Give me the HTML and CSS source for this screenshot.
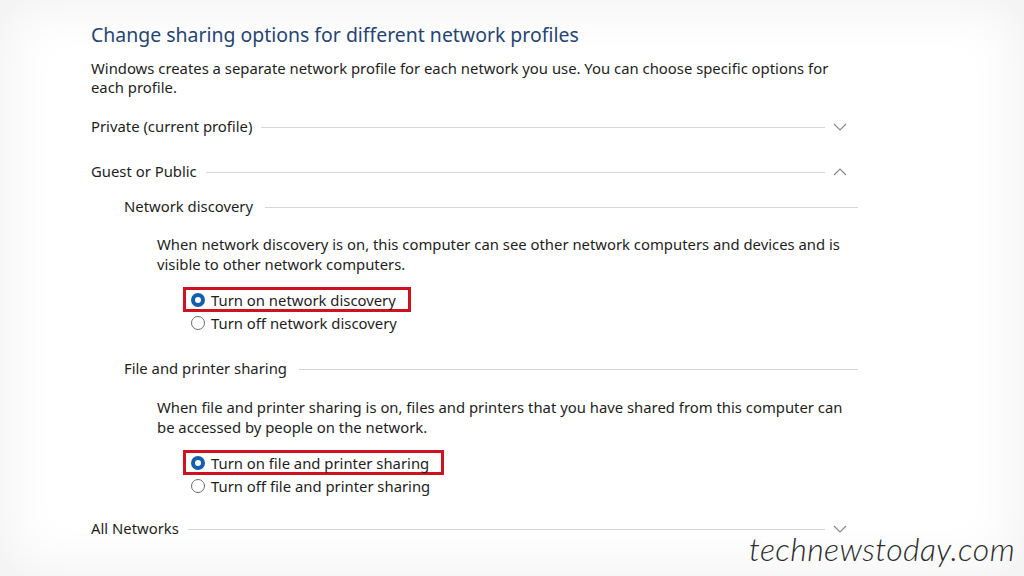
FILE: index.html
```html
<!DOCTYPE html>
<html lang="en">
<head>
  <meta charset="UTF-8" />
  <meta name="viewport" content="width=device-width, initial-scale=1" />
  <title>Advanced sharing settings</title>
  <link rel="stylesheet" href="styles.css">
</head>
<body>
  <div class="painel">
    <h1 class="titulo">Change sharing options for different network profiles</h1>
    <p class="intro">Windows creates a separate network profile for each network you use. You can choose specific options for each profile.</p>

    <div class="perfil perfil-private">
      <span class="perfil-nome">Private (current profile)</span>
      <span class="linha"></span>
      <svg class="seta" width="30" height="10" viewBox="0 0 30 10"><path d="M9 2 L15 8 L21 2" /></svg>
    </div>

    <div class="perfil perfil-guest">
      <span class="perfil-nome">Guest or Public</span>
      <span class="linha"></span>
      <svg class="seta" width="30" height="10" viewBox="0 0 30 10"><path d="M9 8 L15 2 L21 8" /></svg>
    </div>

    <div class="grupo">
      <div class="grupo-topo">
        <span class="grupo-nome">Network discovery</span>
        <span class="linha"></span>
      </div>
      <p class="texto">When network discovery is on, this computer can see other network computers and devices and is visible to other network computers.</p>
      <div class="opcoes">
        <label class="opcao marcada"><span class="radio on"></span>Turn on network discovery</label>
        <label class="opcao"><span class="radio"></span>Turn off network discovery</label>
      </div>
    </div>

    <div class="grupo grupo-arquivos">
      <div class="grupo-topo">
        <span class="grupo-nome">File and printer sharing</span>
        <span class="linha"></span>
      </div>
      <p class="texto">When file and printer sharing is on, files and printers that you have shared from this computer can be accessed by people on the network.</p>
      <div class="opcoes">
        <label class="opcao marcada"><span class="radio on"></span>Turn on file and printer sharing</label>
        <label class="opcao"><span class="radio"></span>Turn off file and printer sharing</label>
      </div>
    </div>

    <div class="perfil perfil-all">
      <span class="perfil-nome">All Networks</span>
      <span class="linha"></span>
      <svg class="seta" width="30" height="10" viewBox="0 0 30 10"><path d="M9 2 L15 8 L21 2" /></svg>
    </div>
  </div>

  <div class="marca">technewstoday.com</div>
</body>
</html>
```

FILE: styles.css
```css
* {
  margin: 0;
  padding: 0;
  box-sizing: border-box;
}
html, body {
  height: 100%;
  overflow: hidden;
}
body {
  background: #fff;
  font-family: "Noto Sans", "Open Sans", sans-serif;
  color: #1e1e1e;
  position: relative;
  box-shadow: inset 0 0 60px rgba(0, 0, 0, 0.07);
}
.painel {
  width: 767px;
  margin-left: 91px;
  padding-top: 21px;
}
.titulo {
  font-weight: 400;
  font-size: 19.45px;
  line-height: 28px;
  color: #264473;
}
.intro {
  margin-top: 10px;
  font-size: 14.85px;
  line-height: 19px;
  width: 745px;
}
.perfil,
.grupo-topo {
  display: flex;
  align-items: center;
  height: 20px;
  font-size: 14.85px;
}
.perfil {
  width: 764px;
}
.perfil-private {
  margin-top: 19px;
}
.perfil-guest {
  margin-top: 25px;
}
.perfil-all {
  margin-top: 20px;
}
.linha {
  flex: 1;
  height: 1px;
  background: #d6d6d6;
  margin-left: 9px;
  margin-top: 2px;
}
.seta {
  flex: none;
  margin-top: 2px;
}
.seta path {
  fill: none;
  stroke: #8a8a8a;
  stroke-width: 1.2;
}
.grupo {
  margin-left: 33px;
  margin-top: 15px;
}
.grupo-arquivos {
  margin-top: 23px;
}
.grupo-topo .linha {
  margin-left: 12px;
}
.texto {
  margin-left: 33px;
  margin-top: 19px;
  font-size: 14.85px;
  line-height: 19.5px;
  width: 690px;
}
.grupo-arquivos .texto {
  margin-top: 20px;
}
.opcoes {
  margin-left: 59px;
  margin-top: 13px;
  display: flex;
  flex-direction: column;
  align-items: flex-start;
}
.opcao {
  display: flex;
  align-items: center;
  height: 25px;
  padding: 0 12px 0 5px;
  border: 3px solid transparent;
  font-size: 14.85px;
}
.opcao + .opcao {
  margin-top: -2px;
}
.marcada {
  border-color: #cf1220;
}
.radio {
  width: 14px;
  height: 14px;
  border-radius: 50%;
  border: 1px solid #6e6e6e;
  background: #fff;
  margin-right: 6px;
  flex: none;
}
.radio.on {
  border: 4.5px solid #135fae;
  background: #fff;
}
.marca {
  position: absolute;
  right: 9px;
  bottom: 8px;
  font-family: "Lato", sans-serif;
  font-style: italic;
  font-weight: 300;
  font-size: 32px;
  letter-spacing: 0.4px;
  color: #2b2b2b;
}
```
